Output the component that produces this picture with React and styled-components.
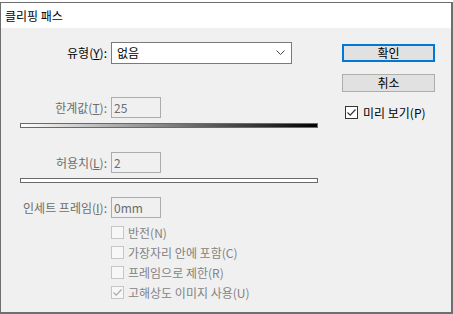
import React from "react";
import styled, { createGlobalStyle } from "styled-components";

const Global = createGlobalStyle`
  html, body {
    margin: 0;
    padding: 0;
    background: #ffffff;
  }
  body {
    font-family: "Noto Sans CJK KR", "Noto Sans", sans-serif;
    font-size: 12px;
    color: #000;
  }
`;

const Window = styled.div`
  margin-top: 2px;
  width: 453px;
  height: 312px;
  box-sizing: border-box;
  border: 1px solid #6e6e6e;
  border-width: 1px 2px 2px 1px;
  background: #f0f0f0;
  display: flex;
  flex-direction: column;
`;

const TitleBar = styled.div`
  height: 25px;
  background: #ffffff;
  display: flex;
  align-items: center;
  padding-left: 4px;
  font-size: 12px;
  line-height: 1;
`;

const Body = styled.div`
  display: flex;
  flex: 1;
`;

const Main = styled.div`
  width: 330px;
  display: flex;
  flex-direction: column;
`;

const Side = styled.div`
  display: flex;
  flex-direction: column;
  padding: 16px 0 0 11px;
`;

const FieldRow = styled.div`
  display: grid;
  grid-template-columns: 106px auto;
  column-gap: 4px;
  align-items: center;
  justify-items: start;
  margin-top: ${(p) => p.$top}px;
`;

const Label = styled.label`
  justify-self: end;
  line-height: 1;
  color: ${(p) => (p.$disabled ? "#6d6d6d" : "#000")};
  white-space: nowrap;
  u {
    text-underline-offset: 1px;
  }
`;

const Select = styled.div`
  width: 181px;
  height: 22px;
  box-sizing: border-box;
  border: 1px solid #7a7a7a;
  background: #fff;
  display: flex;
  align-items: center;
  justify-content: space-between;
  padding: 0 6px 0 5px;
  line-height: 1;
`;

const Input = styled.div`
  width: 50px;
  height: 21px;
  box-sizing: border-box;
  border: 1px solid #acacac;
  background: #f0f0f0;
  color: #6d6d6d;
  display: flex;
  align-items: center;
  padding-left: 2px;
  line-height: 1;
`;

const Slider = styled.div`
  margin: ${(p) => p.$top}px 0 0 19px;
  width: 298px;
  height: 5px;
  box-sizing: border-box;
  border: 1px solid #6a6a6a;
  background: ${(p) =>
    p.$gradient ? "linear-gradient(to right, #ffffff, #000000)" : "#ffffff"};
`;

const CheckList = styled.div`
  margin: 8px 0 0 110px;
  display: flex;
  flex-direction: column;
  gap: 7px;
`;

const Preview = styled.div`
  margin: 2px 0 0 3px;
`;

const CheckRow = styled.div`
  display: flex;
  align-items: center;
  gap: ${(p) => p.$gap || 4}px;
  height: 13px;
  line-height: 1;
  white-space: nowrap;
  color: ${(p) => (p.$disabled ? "#838383" : "#000")};
`;

const Box = styled.span`
  width: 13px;
  height: 13px;
  box-sizing: border-box;
  border: 1px solid ${(p) => (p.$disabled ? "#c6c6c6" : "#333333")};
  background: ${(p) => (p.$disabled ? "#f7f7f7" : "#ffffff")};
  display: flex;
  align-items: center;
  justify-content: center;
  flex: none;
`;

const Button = styled.div`
  width: 93px;
  height: 18px;
  box-sizing: border-box;
  border: ${(p) => (p.$primary ? "2px solid #0078d7" : "1px solid #adadad")};
  background: #e1e1e1;
  display: flex;
  align-items: center;
  justify-content: center;
  line-height: 1;
  margin-bottom: 12px;
`;

const Chevron = () => (
  <svg width="9" height="6" viewBox="0 0 9 6">
    <path d="M0.5 0.5 L4.5 4.5 L8.5 0.5" fill="none" stroke="#444" strokeWidth="1" />
  </svg>
);

const Tick = ({ color }) => (
  <svg width="11" height="11" viewBox="0 0 11 11">
    <path d="M1.5 5.5 L4.2 8.2 L9.5 2.5" fill="none" stroke={color} strokeWidth="1.2" />
  </svg>
);

const Check = ({ checked, disabled, children, gap }) => (
  <CheckRow $disabled={disabled} $gap={gap}>
    <Box $disabled={disabled}>
      {checked && <Tick color={disabled ? "#a8a8a8" : "#333"} />}
    </Box>
    {children}
  </CheckRow>
);

export default function App() {
  return (
    <>
      <Global />
      <Window>
        <TitleBar>클리핑 패스</TitleBar>
        <Body>
          <Main>
            <FieldRow $top={14}>
              <Label>
                유형(<u>Y</u>):
              </Label>
              <Select>
                <span>없음</span>
                <Chevron />
              </Select>
            </FieldRow>

            <FieldRow $top={33}>
              <Label $disabled>
                한계값(<u>T</u>):
              </Label>
              <Input>25</Input>
            </FieldRow>
            <Slider $top={5} $gradient />

            <FieldRow $top={24}>
              <Label $disabled>
                허용치(<u>L</u>):
              </Label>
              <Input>2</Input>
            </FieldRow>
            <Slider $top={5} />

            <FieldRow $top={14}>
              <Label $disabled>
                인세트 프레임(<u>I</u>):
              </Label>
              <Input>0mm</Input>
            </FieldRow>

            <CheckList>
              <Check disabled>반전(N)</Check>
              <Check disabled>가장자리 안에 포함(C)</Check>
              <Check disabled>프레임으로 제한(R)</Check>
              <Check disabled checked>
                고해상도 이미지 사용(U)
              </Check>
            </CheckList>
          </Main>
          <Side>
            <Button $primary>확인</Button>
            <Button>취소</Button>
            <Preview>
              <Check checked gap={5}>
                미리 보기(P)
              </Check>
            </Preview>
          </Side>
        </Body>
      </Window>
    </>
  );
}
